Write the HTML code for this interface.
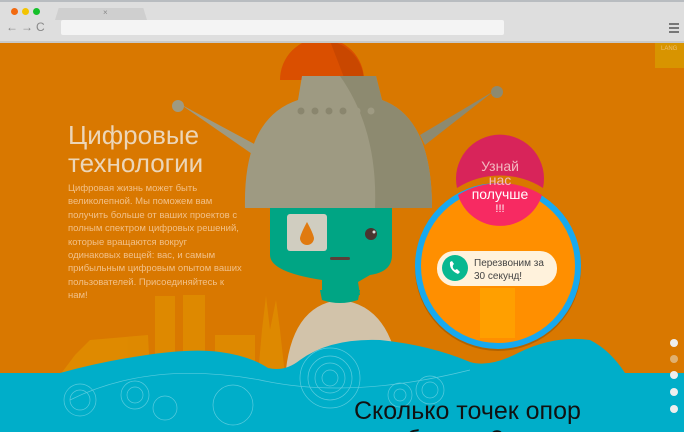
<!DOCTYPE html>
<html><head><meta charset="utf-8"><style>
html,body{margin:0;padding:0;width:684px;height:432px;overflow:hidden;background:#d97800;font-family:"Liberation Sans",sans-serif}
#w{position:relative;width:684px;height:432px;overflow:hidden}
.abs{position:absolute}
</style></head><body><div id="w">
<div class="abs" style="left:0;top:0;width:684px;height:41px;background:#dedede;border-top:2px solid #b8bcc0;box-sizing:border-box"></div>
<div class="abs" style="left:11px;top:8px;width:7px;height:7px;border-radius:50%;background:#f26a10"></div>
<div class="abs" style="left:22px;top:8px;width:7px;height:7px;border-radius:50%;background:#f3c400"></div>
<div class="abs" style="left:33px;top:8px;width:7px;height:7px;border-radius:50%;background:#15c02a"></div>
<div class="abs" style="left:55px;top:8px;width:92px;height:12px;background:#cfcfcf;clip-path:polygon(4% 0,96% 0,100% 100%,0 100%)"></div>
<div class="abs" style="left:103px;top:8px;font-size:8px;color:#888">×</div>
<div class="abs" style="left:6px;top:20px;font-size:12px;color:#888;letter-spacing:3px">←→C</div>
<div class="abs" style="left:61px;top:20px;width:443px;height:15px;background:#f4f4f4;border-radius:2px"></div>
<div class="abs" style="left:669px;top:23px;width:10px;height:2px;background:#777;box-shadow:0 4px #777,0 8px #777"></div>
<div class="abs" style="left:0;top:41px;width:684px;height:2px;background:#c9c9c9"></div>

<svg class="abs" style="left:0;top:43px" width="684" height="389" viewBox="0 43 684 389">
<rect x="655" y="43" width="29" height="25" fill="#d89400"/>
<text x="661" y="50" font-size="6" fill="#f0c070" font-family="Liberation Sans">LANG</text>
<g fill="#e08e00" opacity="0.8">
<rect x="155" y="296" width="20" height="80"/><rect x="183" y="295" width="22" height="80"/>
<path d="M60 375 L75 355 L90 340 L148 335 L150 375Z"/>
<path d="M258 375 L262 330 L266 296 L270 330 L276 300 L280 330 L285 375Z"/>
<rect x="215" y="335" width="40" height="40"/>
</g>
<path d="M280 80 A42 42 0 0 1 364 80 Z" fill="#da4f00"/>
<path d="M330 41 A42 42 0 0 1 364 80 L345 80Z" fill="#c94700"/>
<path d="M180 104 L258 146 L255 156 Z" fill="#9e9a82"/>
<circle cx="178" cy="106" r="6" fill="#9e9a82"/>
<path d="M494 91 L420 135 L425 145 Z" fill="#8d8a70"/>
<circle cx="497" cy="92" r="6" fill="#8d8a70"/>
<path d="M245 208 Q243 118 298 100 L302 76 L376 76 L382 100 Q432 118 432 208Z" fill="#9e9a82"/>
<path d="M340 76 L376 76 L382 100 Q432 118 432 208 L375 208 Q378 130 340 76Z" fill="#8d8a70"/>
<g fill="#8a866e"><circle cx="301" cy="111" r="3.5"/><circle cx="315" cy="111" r="3.5"/><circle cx="329" cy="111" r="3.5"/><circle cx="343" cy="111" r="3.5"/><circle cx="357" cy="111" r="3.5" fill="#9e9a82"/><circle cx="371" cy="111" r="3.5" fill="#9e9a82"/></g>
<path d="M285 380 Q290 305 340 300 Q392 305 400 380Z" fill="#d2c3aa"/>
<path d="M322 300 L320 290 L360 290 L358 300 Q340 306 322 300Z" fill="#00a584"/>
<path d="M270 208 L392 208 L392 255 Q392 272 370 275 L358 282 L360 295 L322 295 L322 280 Q270 272 270 255Z" fill="#00a584"/>
<rect x="287" y="214" width="40" height="37" rx="3" fill="#d0cdc0"/>
<path d="M307 222 Q301 233 300 238 A7 7 0 0 0 314 238 Q313 233 307 222Z" fill="#e07a10"/>
<circle cx="371" cy="234" r="6" fill="#4a3530"/><circle cx="374" cy="232" r="1.5" fill="#ddd"/>
<rect x="330" y="257" width="20" height="3" rx="1.5" fill="#5a3f38"/>
<path d="M0 373 L60 373 Q100 362 140 356 Q190 348 220 352 Q250 356 268 368 Q285 372 300 360 Q330 338 380 340 Q430 345 470 362 Q490 368 520 352 Q555 335 590 340 Q610 350 625 373 L684 373 L684 432 L0 432Z" fill="#00aec9"/>
<g fill="none" stroke="#6fd2e2" stroke-width="0.7" opacity="0.8">
<circle cx="80" cy="400" r="10"/><circle cx="80" cy="400" r="16"/><circle cx="135" cy="395" r="8"/><circle cx="135" cy="395" r="14"/>
<circle cx="165" cy="408" r="12"/><circle cx="233" cy="405" r="20"/><circle cx="330" cy="378" r="8"/><circle cx="330" cy="378" r="15"/><circle cx="330" cy="378" r="22"/><circle cx="330" cy="378" r="30"/>
<circle cx="400" cy="395" r="6"/><circle cx="400" cy="395" r="12"/><circle cx="430" cy="390" r="8"/><circle cx="430" cy="390" r="14"/>
<path d="M70 400 Q150 360 260 380 Q350 400 470 370"/>
</g>
<circle cx="498" cy="268" r="83" fill="rgba(0,0,0,0.18)"/>
<circle cx="498" cy="266" r="80" fill="#ff8f00" stroke="#17a9ef" stroke-width="6"/>
<rect x="480" y="288" width="35" height="50" fill="#ffa500" opacity="0.7"/>
<path d="M457 188 A44 44 0 1 1 543 188 A80 80 0 0 0 457 188Z" fill="#d8245a"/>
<path d="M458 195 A80 80 0 0 1 542 195 A44 44 0 0 1 458 195Z" fill="#f72a62"/>
<text x="500" y="171" font-size="14" fill="#f3b8c0" text-anchor="middle">Узнай</text>
<text x="500" y="185" font-size="14" fill="#f3b8c0" text-anchor="middle">нас</text>
<text x="500" y="199" font-size="14" fill="#fff" text-anchor="middle">получше</text>
<text x="500" y="212" font-size="11" fill="#fff" text-anchor="middle">!!!</text>
<rect x="437" y="251" width="120" height="35" rx="17" fill="#fff2dc"/>
<circle cx="455" cy="268" r="13" fill="#08b890"/>
<path d="M450 262 Q449 270 458 274 L460 272 L457 269 L455 270 Q452 268 453 265 L454 264 L452 261Z" fill="#fff"/>
<text x="474" y="266" font-size="10" fill="#444">Перезвоним за</text>
<text x="474" y="279" font-size="10" fill="#444">30 секунд!</text>
<g fill="#eee"><circle cx="674" cy="343" r="4"/><circle cx="674" cy="359" r="4" fill="#e0b070"/><circle cx="674" cy="375" r="4"/><circle cx="674" cy="392" r="4"/><circle cx="674" cy="409" r="4"/></g>
</svg>

<div class="abs" style="left:68px;top:121px;font-size:26px;line-height:28px;color:#ecd6b8">Цифровые<br>технологии</div>
<div class="abs" style="left:68px;top:182px;font-size:9.5px;line-height:13.4px;color:#f1c088;white-space:nowrap">Цифровая жизнь может быть<br>великолепной. Мы поможем вам<br>получить больше от ваших проектов с<br>полным спектром цифровых решений,<br>которые вращаются вокруг<br>одинаковых вещей: вас, и самым<br>прибыльным цифровым опытом ваших<br>пользователей. Присоединяйтесь к<br>нам!</div>
<div class="abs" style="left:354px;top:397px;font-size:25px;line-height:29px;color:#111;white-space:nowrap">Сколько точек опор<br><span style="padding-left:52px">бывает?</span></div>
</div></body></html>
